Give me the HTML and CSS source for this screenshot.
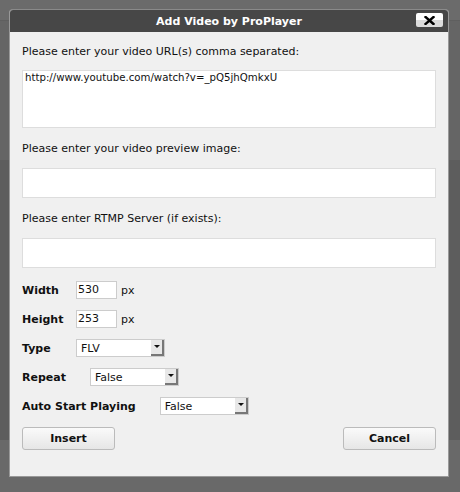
FILE: index.html
```html
<!DOCTYPE html>
<html>
<head>
<meta charset="utf-8">
<link rel="stylesheet" href="styles.css">
</head>
<body>
<div class="dialog">
  <div class="titlebar">
    <span class="title">Add Video by ProPlayer</span>
    <span class="close"><svg width="11" height="9" viewBox="0 0 11 9"><path d="M1.5 1 L9.5 8 M9.5 1 L1.5 8" stroke="#000" stroke-width="2.4" stroke-linecap="square"/></svg></span>
  </div>
  <div class="body">
    <div class="label">Please enter your video URL(s) comma separated:</div>
    <div class="field area">http://www.youtube.com/watch?v=_pQ5jhQmkxU</div>
    <div class="label">Please enter your video preview image:</div>
    <div class="field line"></div>
    <div class="label">Please enter RTMP Server (if exists):</div>
    <div class="field line"></div>
    <div class="row first">
      <span class="name fixed">Width</span>
      <span class="num">530</span><span class="unit">px</span>
    </div>
    <div class="row">
      <span class="name fixed">Height</span>
      <span class="num">253</span><span class="unit">px</span>
    </div>
    <div class="row">
      <span class="name fixed">Type</span>
      <span class="select"><span class="val">FLV</span><span class="arrow"></span></span>
    </div>
    <div class="row">
      <span class="name gap">Repeat</span>
      <span class="select"><span class="val">False</span><span class="arrow"></span></span>
    </div>
    <div class="row">
      <span class="name gap">Auto Start Playing</span>
      <span class="select"><span class="val">False</span><span class="arrow"></span></span>
    </div>
    <div class="buttons">
      <span class="btn">Insert</span>
      <span class="btn">Cancel</span>
    </div>
  </div>
</div>
</body>
</html>
```
FILE: styles.css
```css
html, body {
  margin: 0;
  padding: 0;
}
body {
  width: 460px;
  height: 492px;
  overflow: hidden;
  background: linear-gradient(to bottom, #6b6b6b 0, #6b6b6b 20px, #5f5f5f 20px, #5f5f5f 21px, #656565 21px, #656565 160px, #5d5d5d 160px, #5d5d5d 440px, #696969 440px);
  font-family: "DejaVu Sans", Verdana, sans-serif;
  font-size: 11px;
  color: #111;
  padding-top: 9px;
  padding-left: 9px;
  box-sizing: border-box;
}
.dialog {
  width: 440px;
  height: 468px;
  box-sizing: border-box;
  border: 1px solid #999;
  border-top-color: #8a8a8a;
  border-radius: 4px 4px 0 0;
  background: #f0f0f0;
  display: flex;
  flex-direction: column;
}
.titlebar {
  height: 22px;
  background: #474747;
  border-radius: 3px 3px 0 0;
  position: relative;
  display: flex;
  align-items: center;
  justify-content: center;
}
.title {
  color: #fff;
  font-weight: bold;
  font-size: 11px;
}
.close {
  position: absolute;
  right: 5px;
  top: 3px;
  width: 27px;
  height: 14px;
  background: linear-gradient(to bottom, #fff 0, #fff 50%, #dcdcdc 50%, #dcdcdc 100%);
  border-radius: 2px;
  display: flex;
  align-items: center;
  justify-content: center;
}
.body {
  padding: 10px 12px 0 12px;
  display: flex;
  flex-direction: column;
}
.label {
  height: 20px;
  line-height: 20px;
}
.field {
  background: #fff;
  border: 1px solid #ddd;
  box-sizing: border-box;
  width: 414px;
}
.area {
  height: 58px;
  margin-top: 8px;
  padding: 1px 2px;
  font-size: 10.2px;
  margin-bottom: 11px;
}
.line {
  height: 30px;
  margin-top: 9px;
  margin-bottom: 11px;
}
.row {
  display: flex;
  align-items: center;
  height: 18px;
  margin-top: 11px;
}
.row.first {
  margin-top: 2px;
}
.name {
  font-weight: bold;
}
.fixed {
  width: 54px;
}
.gap {
  margin-right: 24px;
}
.num {
  width: 41px;
  height: 18px;
  box-sizing: border-box;
  border: 1px solid #ccc;
  background: #fff;
  padding-left: 1px;
  line-height: 16px;
}
.unit {
  margin-left: 4px;
}
.select {
  width: 89px;
  height: 18px;
  box-sizing: border-box;
  border: 1px solid #ccc;
  background: #fff;
  display: flex;
  align-items: center;
  justify-content: space-between;
}
.val {
  padding-left: 4px;
}
.arrow {
  width: 13px;
  height: 16px;
  box-sizing: border-box;
  background: #e8e8e8;
  border-right: 2px solid #777;
  border-bottom: 2px solid #777;
  position: relative;
}
.arrow::after {
  content: "";
  position: absolute;
  left: 3px;
  top: 5px;
  border-left: 3px solid transparent;
  border-right: 3px solid transparent;
  border-top: 3px solid #111;
}
.buttons {
  display: flex;
  justify-content: space-between;
  margin-top: 12px;
}
.btn {
  width: 93px;
  height: 23px;
  box-sizing: border-box;
  border: 1px solid #bbb;
  border-radius: 3px;
  background: linear-gradient(to bottom, #fafafa, #e6e6e6);
  font-weight: bold;
  text-align: center;
  line-height: 21px;
}
```
